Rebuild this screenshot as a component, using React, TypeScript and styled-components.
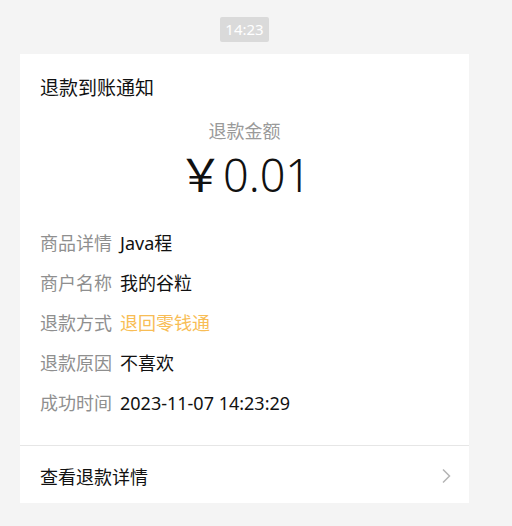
import React from "react";
import styled, { createGlobalStyle } from "styled-components";

const Global = createGlobalStyle`
  html, body { margin: 0; padding: 0; background: #f4f4f4; }
  body { font-family: "Noto Sans", "Noto Sans CJK SC", sans-serif; }
`;

const Page = styled.div`
  width: 449px;
  padding: 17px 20px 22px;
  display: flex;
  flex-direction: column;
  align-items: center;
`;

const TimeBadge = styled.div`
  height: 25px;
  padding: 0 5px;
  background: #dadada;
  border-radius: 2px;
  color: #ffffff;
  font-size: 15px;
  line-height: 25px;
`;

const Card = styled.div`
  margin-top: 12px;
  width: 100%;
  background: #ffffff;
`;

const Body = styled.div`
  padding: 22px 20px 30px;
  display: flex;
  flex-direction: column;
`;

const Title = styled.div`
  font-size: 19px;
  line-height: 24px;
  color: #111;
`;

const AmountLabel = styled.div`
  margin-top: 19px;
  text-align: center;
  font-size: 18px;
  line-height: 24px;
  color: #9a9a9a;
`;

const Amount = styled.div`
  text-align: center;
  font-family: "Noto Sans", "Noto Sans CJK SC", sans-serif;
  font-size: 45px;
  font-weight: 350;
  line-height: 60px;
  color: #111;
`;

const Yen = styled.span`
  font-family: "Noto Sans CJK SC", sans-serif;
  font-weight: 400;
`;

const Rows = styled.div`
  margin-top: 26px;
  display: flex;
  flex-direction: column;
  gap: 16px;
`;

const Row = styled.div`
  display: flex;
  gap: 8px;
  font-size: 18px;
  line-height: 24px;
`;

const Label = styled.span`
  color: #8f8f8f;
  width: 72px;
  flex-shrink: 0;
`;

const Value = styled.span<{ $accent?: boolean }>`
  color: ${(p) => (p.$accent ? "#f8bd55" : "#111")};
`;

const Footer = styled.div`
  height: 58px;
  box-sizing: border-box;
  border-top: 1px solid #e6e6e6;
  padding: 2px 18px 0 20px;
  display: flex;
  align-items: center;
  justify-content: space-between;
  font-size: 18px;
  color: #111;
`;

const Chevron = () => (
  <svg width="10" height="16" viewBox="0 0 10 16" fill="none">
    <path d="M2 1.5 L8.5 8 L2 14.5" stroke="#b5b5b5" strokeWidth="1.5" />
  </svg>
);

const rows: { label: string; value: string; accent?: boolean }[] = [
  { label: "商品详情", value: "Java程" },
  { label: "商户名称", value: "我的谷粒" },
  { label: "退款方式", value: "退回零钱通", accent: true },
  { label: "退款原因", value: "不喜欢" },
  { label: "成功时间", value: "2023-11-07 14:23:29" },
];

export default function App() {
  return (
    <>
      <Global />
      <Page>
        <TimeBadge>14:23</TimeBadge>
        <Card>
          <Body>
            <Title>退款到账通知</Title>
            <AmountLabel>退款金额</AmountLabel>
            <Amount>
              <Yen>￥</Yen>0.01
            </Amount>
            <Rows>
              {rows.map((r) => (
                <Row key={r.label}>
                  <Label>{r.label}</Label>
                  <Value $accent={r.accent}>{r.value}</Value>
                </Row>
              ))}
            </Rows>
          </Body>
          <Footer>
            <span>查看退款详情</span>
            <Chevron />
          </Footer>
        </Card>
      </Page>
    </>
  );
}
